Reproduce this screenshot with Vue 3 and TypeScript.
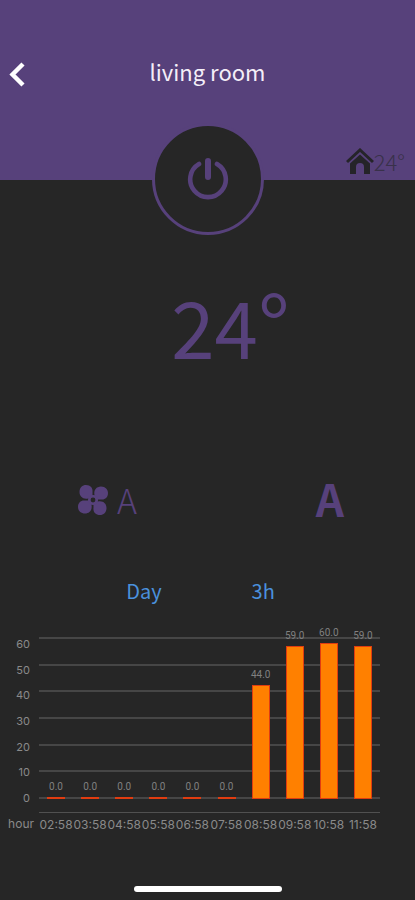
<script setup lang="ts">
interface Reading {
  time: string
  value: number
}

const readings: Reading[] = [
  { time: '02:58', value: 0 },
  { time: '03:58', value: 0 },
  { time: '04:58', value: 0 },
  { time: '05:58', value: 0 },
  { time: '06:58', value: 0 },
  { time: '07:58', value: 0 },
  { time: '08:58', value: 44 },
  { time: '09:58', value: 59 },
  { time: '10:58', value: 60 },
  { time: '11:58', value: 59 },
]

const ticks: number[] = [60, 50, 40, 30, 20, 10, 0]
const scaleMax = 62.5

const barHeight = (value: number): string => `${(value / scaleMax) * 100}%`
</script>

<template>
  <main class="screen">
    <header class="top">
      <div class="bar">
        <button class="back" type="button" aria-label="Back">
          <svg width="18" height="28" viewBox="0 0 18 28">
            <path d="M15 2 4.500 12.500 15 23" fill="none" stroke="#fff" stroke-width="4.400" />
          </svg>
        </button>
        <h1 class="title">living room</h1>
      </div>
      <div class="room">
        <svg width="28" height="27" viewBox="0 0 28 27">
          <path d="M1 14 14 2 27 14" fill="none" stroke="#252429" stroke-width="3" />
          <path d="M4 15.500 14 6.500 24 15.500V26H18V19a4 4 0 0 0-8 0V26H4Z" fill="#252429" />
        </svg>
        <span>24°</span>
      </div>
      <button class="power" type="button" aria-label="Power">
        <svg width="42" height="46" viewBox="0 0 42 46">
          <path d="M12 8A17.800 17.800 0 1 0 30 8" fill="none" stroke="#57417b" stroke-width="4.600" stroke-linecap="round" />
          <path d="M21 5V21" fill="none" stroke="#57417b" stroke-width="6" stroke-linecap="round" />
        </svg>
      </button>
    </header>

    <p class="target">24<span class="degree">°</span></p>

    <section class="modes">
      <button class="fan" type="button" aria-label="Fan speed A">
        <svg width="32" height="32" viewBox="0 0 32 32">
          <g v-for="angle in [0, 90, 180, 270]" :key="angle" :transform="`rotate(${angle} 16 16)`" fill="#57417b">
            <path d="M16 16L11 14.500C6 15.500 2.500 12.500 2.500 8C2.500 3.500 5.500 1 9 1C13.500 1 16 4 15.500 8L15.500 11L19 13Z" />
          </g>
          <circle cx="16" cy="16" r="5" fill="#57417b" />
          <circle cx="16" cy="16" r="2.400" fill="#262626" />
        </svg>
        <span>A</span>
      </button>
      <button class="auto" type="button" aria-label="Mode A">A</button>
    </section>

    <nav class="ranges">
      <button type="button">Day</button>
      <button type="button">3h</button>
    </nav>

    <section class="chart">
      <div class="scale">
        <span v-for="tick in ticks" :key="tick">{{ tick }}</span>
      </div>
      <div class="plot">
        <div class="lines">
          <i v-for="tick in ticks" :key="tick"></i>
        </div>
        <div class="columns">
          <div v-for="item in readings" :key="item.time" class="column">
            <span class="value">{{ item.value.toFixed(1) }}</span>
            <div class="fill" :style="{ height: barHeight(item.value) }"></div>
          </div>
        </div>
      </div>
      <span class="unit">hour</span>
      <div class="times">
        <span v-for="item in readings" :key="item.time">{{ item.time }}</span>
      </div>
    </section>

    <div class="home"></div>
  </main>
</template>

<style>
body {
  background: #262626;
}
</style>

<style scoped>
.screen {
  min-height: 100vh;
  box-sizing: border-box;
  display: flex;
  flex-direction: column;
  background: #262626;
  color: #57417b;
  font-family: "Noto Sans CJK SC", "Noto Sans", sans-serif;
}
button {
  padding: 0;
  border: 0;
  background: none;
  color: inherit;
  font-family: inherit;
  cursor: pointer;
}
svg {
  display: block;
}
.top {
  position: relative;
  height: 180px;
  box-sizing: border-box;
  padding-top: 56px;
  background: #57417b;
}
.bar {
  display: grid;
  grid-template-columns: 36px 1fr 36px;
  align-items: center;
  height: 36px;
}
.back {
  padding-left: 8px;
}
.title {
  margin: 0;
  padding-bottom: 10px;
  text-align: center;
  color: #f4eef8;
  font-size: 22px;
  line-height: 30px;
  font-weight: 400;
}
.room {
  display: flex;
  justify-content: flex-end;
  align-items: center;
  margin-top: 55px;
  padding-right: 10px;
  height: 28px;
  color: #39314a;
  font-size: 22px;
  line-height: 28px;
  font-weight: 300;
}
.power {
  position: absolute;
  left: 50%;
  bottom: -55px;
  width: 112px;
  height: 112px;
  transform: translateX(-50%);
  display: grid;
  place-items: center;
  border: 3px solid #57417b;
  border-radius: 50%;
  background: #262626;
}
.target {
  margin: 95px 0 0;
  padding-left: 46px;
  text-align: center;
  font-size: 78px;
  line-height: 100px;
}
.degree {
  font-size: 86px;
  line-height: 1;
}
.modes {
  display: flex;
  justify-content: space-between;
  align-items: center;
  height: 48px;
  margin-top: 101px;
  padding: 0 71px 0 77px;
}
.fan {
  display: flex;
  align-items: center;
  gap: 8px;
  font-size: 34px;
  line-height: 48px;
  font-weight: 300;
}
.auto {
  padding-bottom: 4px;
  font-size: 44px;
  line-height: 48px;
  font-weight: 700;
}
.ranges {
  display: flex;
  justify-content: center;
  gap: 90px;
  margin-top: 51px;
  padding-right: 14px;
  color: #4a90dc;
}
.ranges button {
  font-size: 20px;
  line-height: 32px;
}
.chart {
  display: grid;
  grid-template-columns: 30px 1fr;
  column-gap: 9px;
  margin-top: 30px;
  padding-right: 35px;
  color: #8a8a8a;
  font-family: Inter, "Liberation Sans", sans-serif;
  font-size: 11px;
}
.scale {
  display: flex;
  flex-direction: column;
  justify-content: space-between;
  height: 168px;
  text-align: right;
  line-height: 14px;
}
.plot {
  display: grid;
  height: 162px;
}
.lines,
.columns {
  grid-area: 1 / 1;
  min-height: 0;
}
.lines {
  display: flex;
  flex-direction: column;
  justify-content: space-between;
}
.lines i {
  height: 2px;
  background: #464646;
}
.columns {
  display: grid;
  grid-template-columns: repeat(10, 1fr);
}
.column {
  display: flex;
  flex-direction: column;
  justify-content: flex-end;
  align-items: center;
  min-height: 0;
}
.value {
  flex: none;
  margin-bottom: 4px;
  color: #808080;
  font-family: Roboto, sans-serif;
  font-size: 10px;
  line-height: 12px;
}
.fill {
  flex: none;
  width: 18px;
  box-sizing: border-box;
  border: 1px solid #e03c10;
  background: #ff8000;
}
.unit {
  margin-top: 11px;
  margin-right: -4px;
  justify-self: end;
  font-size: 12px;
  line-height: 16px;
  white-space: nowrap;
}
.times {
  display: grid;
  grid-template-columns: repeat(10, 1fr);
  align-self: start;
  margin-top: 7px;
  padding-top: 4px;
  border-top: 1px solid #505050;
  font-size: 12px;
  line-height: 16px;
}
.times span {
  display: flex;
  justify-content: center;
  white-space: nowrap;
}
.home {
  width: 148px;
  height: 6px;
  margin: auto auto 8px;
  border-radius: 3px;
  background: #fff;
}
</style>
